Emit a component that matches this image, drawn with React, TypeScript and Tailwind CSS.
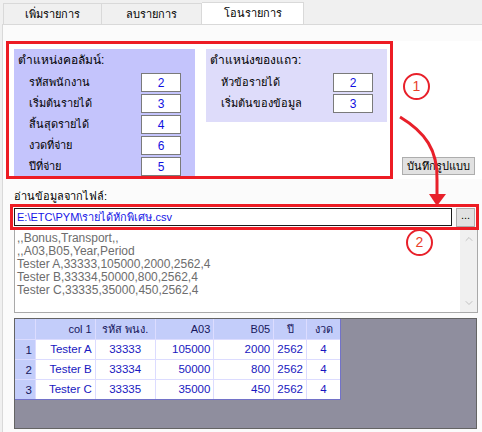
import { ChevronDown, ChevronUp } from "lucide-react";

const colFields = [
  { label: "รหัสพนักงาน", value: "2" },
  { label: "เริ่มต้นรายได้", value: "3" },
  { label: "สิ้นสุดรายได้", value: "4" },
  { label: "งวดที่จ่าย", value: "6" },
  { label: "ปีที่จ่าย", value: "5" },
];

const rowFields = [
  { label: "หัวข้อรายได้", value: "2" },
  { label: "เริ่มต้นของข้อมูล", value: "3" },
];

const csvLines = [
  ",,Bonus,Transport,,",
  ",,A03,B05,Year,Period",
  "Tester A,33333,105000,2000,2562,4",
  "Tester B,33334,50000,800,2562,4",
  "Tester C,33335,35000,450,2562,4",
];

const columns = [
  { title: "col 1", w: "w-[60px]", align: "text-right" },
  { title: "รหัส พนง.", w: "w-[60px]", align: "text-center" },
  { title: "A03", w: "w-[59px]", align: "text-right" },
  { title: "B05", w: "w-[60px]", align: "text-right" },
  { title: "ปี", w: "w-[33px]", align: "text-center" },
  { title: "งวด", w: "w-[33px]", align: "text-center" },
];

const rows = [
  ["Tester A", "33333", "105000", "2000", "2562", "4"],
  ["Tester B", "33334", "50000", "800", "2562", "4"],
  ["Tester C", "33335", "35000", "450", "2562", "4"],
];

function FieldRow({ label, value }: { label: string; value: string }) {
  return (
    <div className="flex h-[19px] items-center">
      <div className="w-[123px] pl-[11px] text-[11px] text-black">{label}</div>
      <div className="flex h-[19px] w-[40px] items-center justify-center border border-[#7a7a7a] bg-white text-[12px] text-[#1010e0]">
        {value}
      </div>
    </div>
  );
}

function Marker({ n, className }: { n: string; className: string }) {
  return (
    <div
      className={`absolute flex h-[27px] w-[27px] items-center justify-center rounded-full border-[2px] border-[#e8202a] text-[14px] text-[#e8402a] ${className}`}
    >
      {n}
    </div>
  );
}

export default function App() {
  return (
    <div className="relative h-[432px] w-[482px] overflow-hidden bg-[#f0f0f0] font-['Liberation_Sans','Noto_Sans',sans-serif] text-[11px]">
      {/* tabs */}
      <div className="flex h-[24px] items-end pl-[3px]">
        <div className="flex h-[21px] w-[99px] items-center justify-center border border-b-0 border-[#d9d9d9] bg-[#f0f0f0]">
          เพิ่มรายการ
        </div>
        <div className="flex h-[21px] w-[100px] items-center justify-center border border-b-0 border-l-0 border-[#d9d9d9] bg-[#f0f0f0]">
          ลบรายการ
        </div>
        <div className="flex h-[22px] w-[102px] items-center justify-center border border-b-0 border-l-0 border-[#d9d9d9] bg-white">
          โอนรายการ
        </div>
      </div>

      {/* page */}
      <div className="ml-[2px] h-[408px] border-l border-t border-[#d9d9d9] bg-[#fbfbfb] pt-[16px]">
        <div className="flex bg-white pl-[3px]">
          <div className="flex h-[138px] w-[387px] gap-[11px] overflow-hidden border-[3px] border-[#ed1c24] pl-[5px] pt-[5px]">
            <div className="h-[140px] w-[181px] bg-[#c4c4fc] pl-[4px] pt-[3px]">
              <div className="h-[16px] text-[12px] leading-[16px] text-black">ตำแหน่งคอลัมน์:</div>
              <div className="mt-[5px] flex flex-col gap-[2px]">
                {colFields.map((f) => (
                  <FieldRow key={f.label} {...f} />
                ))}
              </div>
            </div>
            <div className="h-[73px] w-[181px] bg-[#dedcfa] pl-[4px] pt-[3px]">
              <div className="h-[16px] text-[12px] leading-[16px] text-black">ตำแหน่งของแถว:</div>
              <div className="mt-[5px] flex flex-col gap-[2px]">
                {rowFields.map((f) => (
                  <FieldRow key={f.label} {...f} />
                ))}
              </div>
            </div>
          </div>
          <div className="flex items-end pb-[4px] pl-[9px]">
            <div className="flex h-[18px] w-[73px] items-center justify-center border border-[#adadad] bg-[#e1e1e1] text-[11px]">
              บันทึกรูปแบบ
            </div>
          </div>
        </div>

        <div className="ml-[11px] mt-[10px] h-[14px] leading-[14px]">อ่านข้อมูลจากไฟล์:</div>

        <div className="ml-[7px] mt-[1px] flex h-[26px] w-[469px] items-center gap-[4px] border-[3px] border-[#ed1c24] pl-[1px]">
          <div className="flex h-[18px] w-[438px] items-center border border-[#1a1a1a] bg-white pl-[2px] text-[11px] text-[#1515e6]">
            E:\ETC\PYM\รายได้หักพิเศษ.csv
          </div>
          <div className="flex h-[19px] w-[19px] items-center justify-center border border-[#adadad] bg-[#e1e1e1] pb-[4px] text-[11px]">
            ...
          </div>
        </div>

        <div className="ml-[11px] flex h-[83px] w-[464px] border border-t-0 border-[#a9a9a9] bg-white">
          <div className="flex-1 pl-[2px] pt-[2px] text-[12px] leading-[13px] text-[#6d6d6d]">
            {csvLines.map((l) => (
              <div key={l}>{l}</div>
            ))}
          </div>
          <div className="flex w-[17px] flex-col items-center justify-between bg-[#f0f0f0] py-[3px] text-[#c2c2c2]">
            <ChevronUp size={12} strokeWidth={2} />
            <ChevronDown size={12} strokeWidth={2} />
          </div>
        </div>

        {/* grid */}
        <div className="ml-[11px] mt-[5px] h-[111px] w-[463px] border border-[#646464] bg-[#8f8e9e]">
          <div className="flex w-[326px] flex-col border-b border-r border-[#7272c8]">
            <div className="flex h-[20px] bg-[#c3cdfa] text-[11px] text-[#16165c]">
              <div className="w-[21px] border-r border-[#dcdcff]" />
              {columns.map((c) => (
                <div key={c.title} className={`${c.w} ${c.align} border-r border-[#dcdcff] px-[3px] leading-[20px] last:border-r-0`}>
                  {c.title}
                </div>
              ))}
            </div>
            {rows.map((r, i) => (
              <div key={r[0]} className="flex h-[20px] border-t border-[#dcdcff] text-[11.5px]">
                <div className="w-[21px] border-r border-[#dcdcff] bg-[#c3cdfa] pr-[3px] text-right leading-[20px] text-[#16165c]">
                  {i + 1}
                </div>
                {r.map((v, j) => (
                  <div
                    key={j}
                    className={`${columns[j].w} ${columns[j].align} border-r border-[#dcdcff] bg-white px-[3px] leading-[19px] text-[#1818c0] last:border-r-0`}
                  >
                    {v}
                  </div>
                ))}
              </div>
            ))}
          </div>
        </div>
      </div>

      {/* annotations */}
      <Marker n="1" className="left-[403px] top-[73px]" />
      <Marker n="2" className="left-[406px] top-[229px]" />
      <svg className="absolute left-0 top-0" width="482" height="432" viewBox="0 0 482 432">
        <path d="M400 117 C 425 132, 438 150, 437 180 L 437 196" fill="none" stroke="#e8202a" strokeWidth="3" />
        <path d="M429 194 L 446 194 L 437 206 Z" fill="#e8202a" />
      </svg>
    </div>
  );
}
